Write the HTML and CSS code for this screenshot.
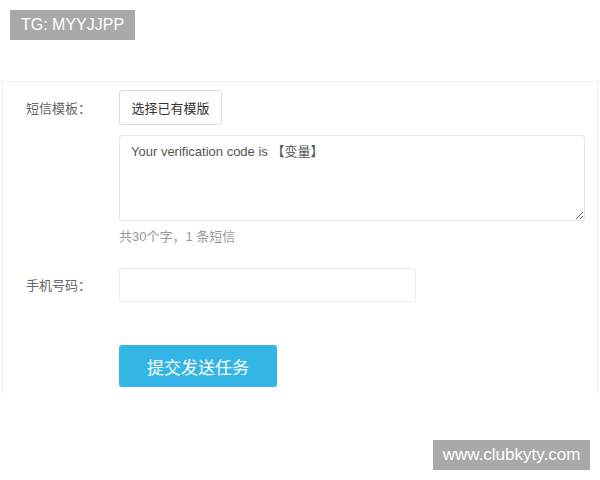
FILE: index.html
```html
<!DOCTYPE html>
<html lang="zh-CN">
<head>
<meta charset="utf-8">
<title>短信发送</title>
<link rel="stylesheet" href="styles.css">
</head>
<body>
<div class="tg">TG: MYYJJPP</div>
<div class="panel">
  <div class="row">
    <div class="label">短信模板：</div>
    <div class="field">
      <button class="pick" type="button">选择已有模版</button>
      <textarea class="msg">Your verification code is 【变量】</textarea>
      <div class="hint">共30个字，1 条短信</div>
    </div>
  </div>
  <div class="row phone-row">
    <div class="label">手机号码：</div>
    <div class="field">
      <input class="phone" type="text">
    </div>
  </div>
  <div class="row submit-row">
    <div class="label"></div>
    <div class="field">
      <button class="submit" type="button">提交发送任务</button>
    </div>
  </div>
</div>
<div class="site">www.clubkyty.com</div>
</body>
</html>
```
FILE: styles.css
```css
html, body {
  margin: 0;
  padding: 0;
  background: #fff;
  font-family: "Liberation Sans", "Noto Sans CJK SC", sans-serif;
}
body {
  position: relative;
  width: 600px;
  height: 480px;
  overflow: hidden;
}
.tg {
  display: block;
  width: 125px;
  height: 30px;
  margin: 10px 0 0 10px;
  background: #a9a9a9;
  color: #fff;
  font-size: 16px;
  line-height: 30px;
  text-align: center;
}
.panel {
  margin: 41px 2px 0 2px;
  height: 313px;
  box-sizing: border-box;
  border: 1px solid #f1f1f1;
  border-bottom: none;
  padding-top: 8px;
}
.row {
  display: grid;
  grid-template-columns: 116px 1fr;
}
.label {
  padding-left: 23px;
  font-size: 13px;
  color: #666;
  font-family: "Noto Sans CJK SC", sans-serif;
}
.row:first-child .label {
  line-height: 35px;
}
.field {
  display: flex;
  flex-direction: column;
  align-items: flex-start;
}
.pick {
  width: 103px;
  height: 35px;
  box-sizing: border-box;
  background: #fff;
  border: 1px solid #ddd;
  border-radius: 3px;
  font-family: "Noto Sans CJK SC", sans-serif;
  font-size: 13px;
  color: #333;
  padding: 0;
}
.msg {
  margin-top: 10px;
  width: 466px;
  height: 86px;
  box-sizing: border-box;
  border: 1px solid #e6e6e6;
  border-radius: 3px;
  padding: 5px 11px;
  font-family: "Liberation Sans", "Noto Sans CJK SC", sans-serif;
  font-size: 13px;
  color: #555;
  resize: vertical;
  outline: none;
}
.hint {
  margin-top: 8px;
  font-size: 13px;
  line-height: 16px;
  color: #999;
  font-family: "Liberation Sans", "Noto Sans CJK SC", sans-serif;
}
.phone-row {
  margin-top: 23px;
}
.phone-row .label {
  line-height: 34px;
}
.phone {
  width: 297px;
  height: 34px;
  box-sizing: border-box;
  border: 1px solid #ececec;
  border-radius: 3px;
  outline: none;
  padding: 0 10px;
}
.submit-row {
  margin-top: 43px;
}
.submit {
  width: 158px;
  height: 42px;
  border: none;
  border-radius: 3px;
  background: #33b5e6;
  color: #fff;
  font-family: "Noto Sans CJK SC", sans-serif;
  font-size: 17px;
  padding: 0;
}
.site {
  position: absolute;
  left: 433px;
  top: 440px;
  width: 157px;
  height: 30px;
  background: #a9a9a9;
  color: #fff;
  font-size: 17px;
  line-height: 30px;
  text-align: center;
}
```
